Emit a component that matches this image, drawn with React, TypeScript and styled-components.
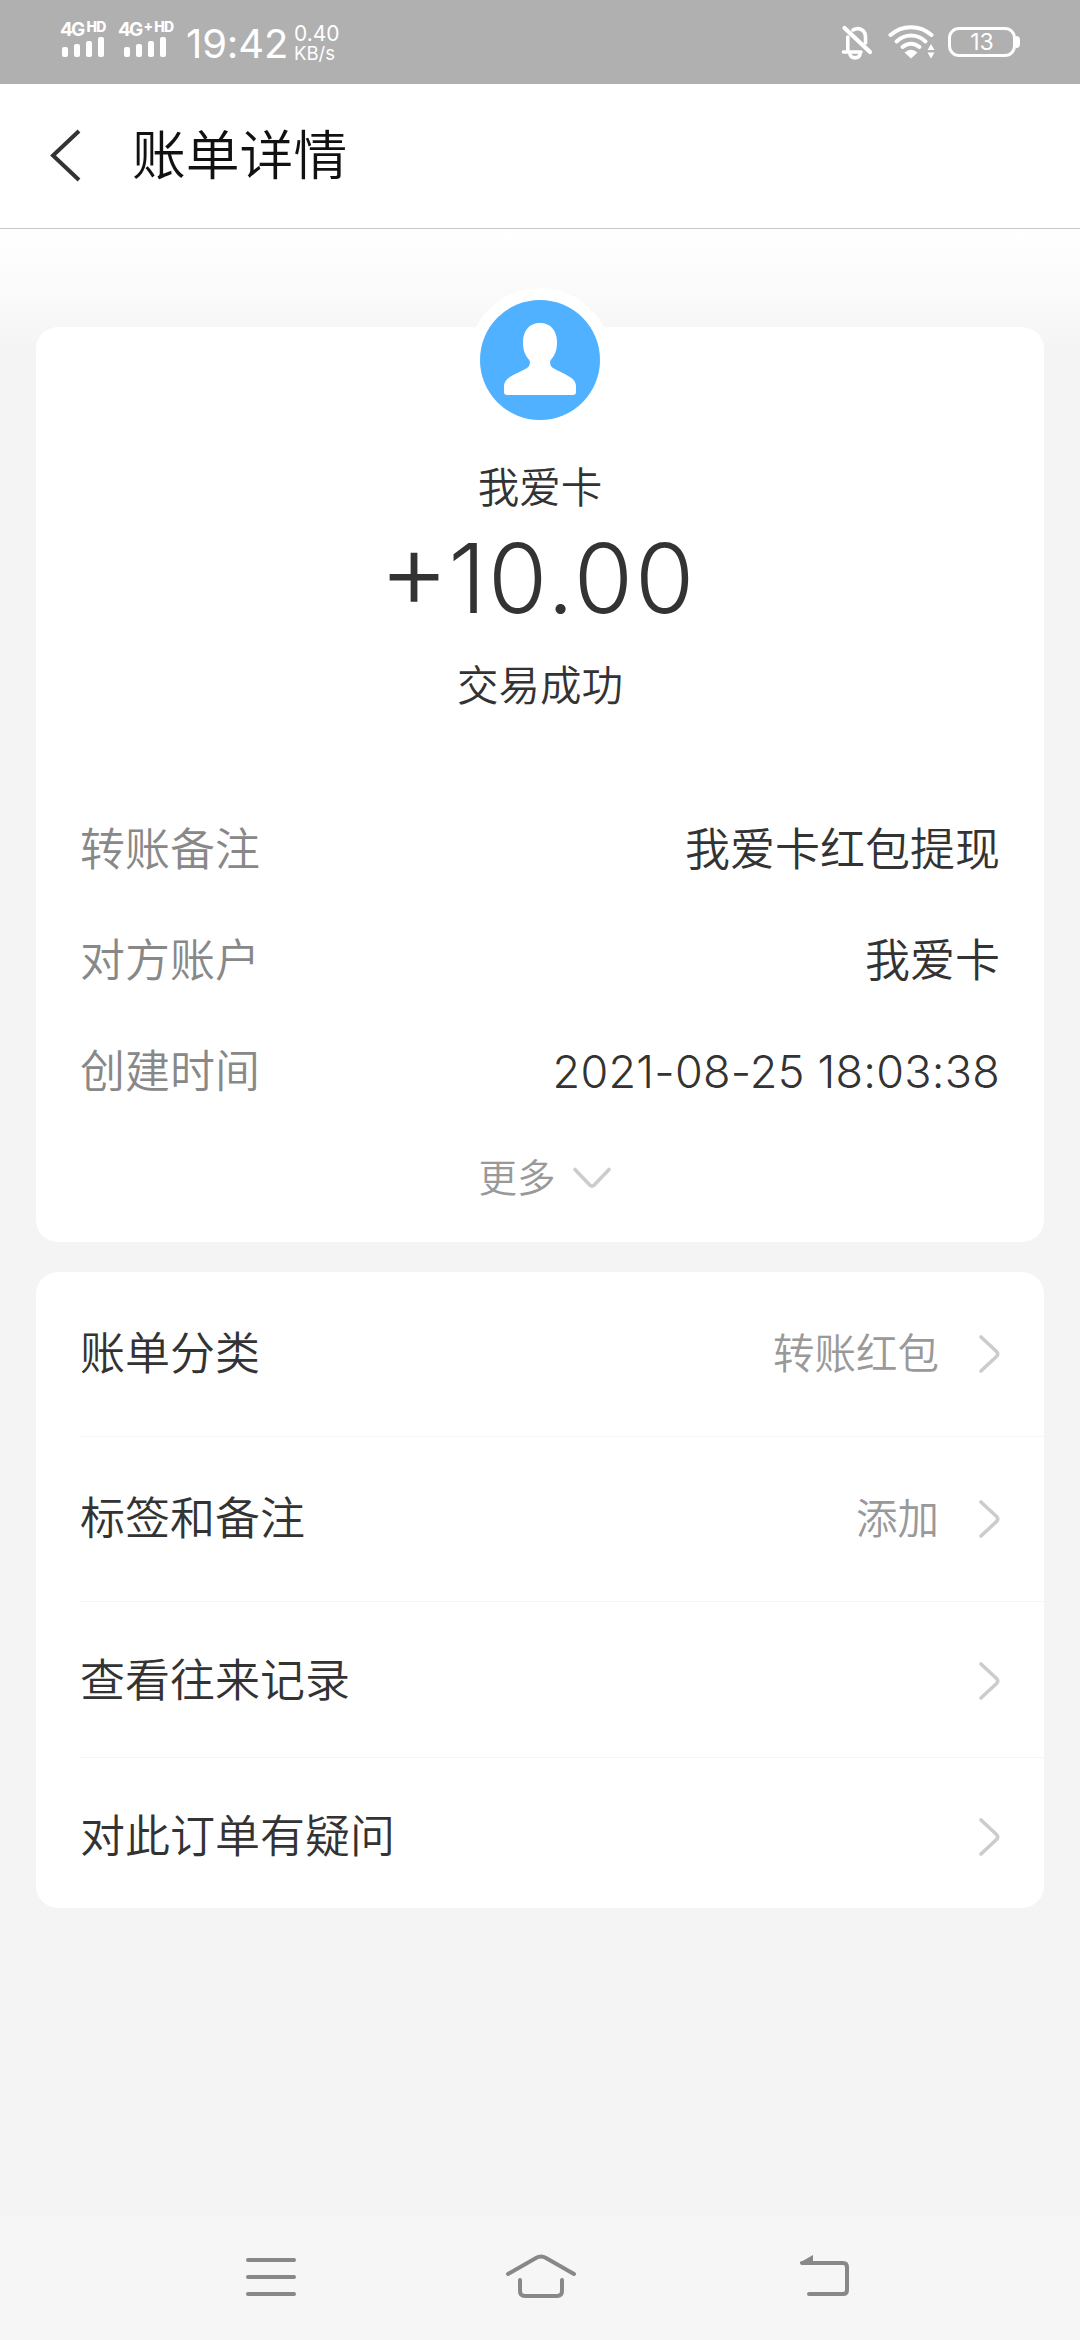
import React from "react";
import styled, { createGlobalStyle } from "styled-components";

const Global = createGlobalStyle`
  * { box-sizing: border-box; }
  body { margin: 0; background: #f4f4f4; }
`;

const Screen = styled.div`
  width: 1080px;
  height: 2340px;
  display: flex;
  flex-direction: column;
  overflow: hidden;
  background: #f4f4f4;
  color: #333;
  font-family: Inter, "Noto Sans CJK SC", sans-serif;
  font-weight: 350;
`;

const StatusBar = styled.header`
  height: 84px;
  flex: none;
  display: flex;
  justify-content: space-between;
  padding: 0 60px 0 60px;
  background: #b0b0b0;
  color: #fff;
`;

const StatusGroup = styled.div<{ $top?: number }>`
  display: flex;
  align-items: flex-start;
  padding-top: ${(p) => p.$top ?? 0}px;
`;

const Signal = styled.div<{ $width: number; $indent: number }>`
  width: ${(p) => p.$width}px;
  display: flex;
  flex-direction: column;
  padding-top: 20px;
  svg { margin-left: ${(p) => p.$indent}px; }
`;

const Network = styled.div`
  height: 17px;
  display: flex;
  align-items: flex-start;
  font-size: 19px;
  line-height: 19px;
  font-weight: 700;
  letter-spacing: -1.8px;
  white-space: nowrap;
`;

const NetworkPlus = styled.span`
  margin-left: 2px;
  font-size: 14px;
  line-height: 11px;
  font-weight: 800;
`;

const NetworkTag = styled.span`
  font-size: 14px;
  line-height: 14px;
  font-weight: 800;
  letter-spacing: -0.8px;
  margin-left: 3px;
`;

const Clock = styled.div`
  width: 108px;
  padding-top: 20px;
  font-size: 40px;
  line-height: 48px;
  font-weight: 400;
  letter-spacing: -0.1px;
`;

const Speed = styled.div`
  padding-top: 24px;
  font-size: 21px;
  line-height: 20px;
  font-weight: 400;
`;

const SpeedUnit = styled.div`
  font-size: 18.5px;
  line-height: 19px;
`;

const Battery = styled.div`
  position: relative;
  width: 68px;
  height: 30px;
  margin: 2px 4px 0 12px;
  border: 3px solid #fff;
  border-radius: 11px;
  text-align: center;
  font-size: 23px;
  line-height: 24px;
  font-weight: 400;
  &::after {
    content: "";
    position: absolute;
    left: 65px;
    top: 6px;
    width: 4px;
    height: 12px;
    border-radius: 0 5px 5px 0;
    background: #fff;
  }
`;

const TitleBar = styled.div`
  height: 145px;
  flex: none;
  display: flex;
  align-items: center;
  padding-left: 48px;
  background: #fff;
  border-bottom: 1px solid #c8c8c8;
`;

const Title = styled.h1`
  margin: 0 0 0 48px;
  font-size: 53.8px;
  line-height: 72px;
  font-weight: 350;
  color: #111;
`;

const Content = styled.main`
  height: 1987px;
  flex: none;
  padding: 98px 36px 0;
  background: linear-gradient(#fff 0, #fafafa 70px, #f4f4f4 122px);
`;

const Card = styled.section`
  background: #fff;
  border-radius: 22px;
`;

const Summary = styled(Card)`
  height: 915px;
  display: flex;
  flex-direction: column;
  align-items: center;
`;

const Avatar = styled.div`
  width: 144px;
  height: 144px;
  flex: none;
  margin-top: -39px;
  padding: 12px;
  border-radius: 50%;
  background: #fff;
`;

const Party = styled.div`
  margin-top: 28px;
  font-size: 41.5px;
  line-height: 56px;
`;

const Amount = styled.div`
  display: flex;
  align-items: center;
  margin: 2px 5px 3px 0;
  height: 120px;
  font-size: 96px;
  line-height: 116px;
  font-weight: 300;
  letter-spacing: 2px;
`;

const Sign = styled.span`
  font-size: 108px;
  margin: 0 -3px 18px 0;
`;

const State = styled.div`
  margin-top: 17px;
  font-size: 41.5px;
  line-height: 56px;
`;

const Details = styled.dl`
  width: 100%;
  margin: 80px 0 0;
  padding: 0 44px;
`;

const Detail = styled.div`
  height: 111px;
  display: flex;
  justify-content: space-between;
  align-items: center;
  font-size: 45px;
  line-height: 60px;
`;

const DetailLabel = styled.dt`
  color: #888;
`;

const DetailValue = styled.dd<{ $digits?: boolean }>`
  margin: 0;
  font-weight: ${(p) => (p.$digits ? 300 : 350)};
  letter-spacing: ${(p) => (p.$digits ? 0.25 : 0)}px;
`;

const More = styled.div`
  display: flex;
  align-items: center;
  gap: 17px;
  margin: 26px 0 0 9px;
  font-size: 38.5px;
  line-height: 50px;
  color: #999;
`;

const Menu = styled(Card)`
  height: 636px;
  margin-top: 30px;
`;

const MenuRow = styled.div<{ $height: number; $shift?: number; $last?: boolean }>`
  height: ${(p) => p.$height}px;
  margin-left: 44px;
  padding: ${(p) => p.$shift ?? 0}px 44px 0 0;
  display: flex;
  align-items: center;
  border-bottom: ${(p) => (p.$last ? 0 : 1)}px solid #f6f6f6;
  font-size: 45px;
  line-height: 60px;
`;

const MenuLabel = styled.span`
  flex: 1;
`;

const MenuValue = styled.span`
  margin-right: 40px;
  font-size: 41.5px;
  color: #999;
`;

const NavBar = styled.nav`
  height: 124px;
  flex: none;
  display: flex;
  justify-content: space-between;
  padding: 35px 225px 0 242px;
  background: #f6f6f6;
`;

const HomeSlot = styled.span`
  margin-right: 15px;
`;

const WifiSlot = styled.span`
  display: flex;
  margin-left: 15px;
`;

const Bars = () => (
  <svg width="42" height="20" viewBox="0 0 42 20" fill="#fff">
    <rect x="0" y="10" width="6" height="10" rx="2" />
    <rect x="12" y="7" width="6" height="13" rx="2" />
    <rect x="24" y="4" width="6" height="16" rx="2" />
    <rect x="36" y="0" width="6" height="20" rx="2" />
  </svg>
);

const BellOff = () => (
  <svg width="32" height="36" viewBox="0 0 32 36" fill="none" stroke="#fff" strokeWidth="3.6" strokeLinecap="round" strokeLinejoin="round">
    <path d="M6.800 27V12M12 5C18 1.500 24.500 5 24.500 12V18M2.500 27H20" />
    <path d="M3.500 3L29 27" strokeWidth="4.200" />
    <path d="M9 29.500C10.500 34 17.500 34 19 29.500" />
  </svg>
);

const Wifi = () => (
  <svg width="48" height="36" viewBox="0 0 48 36" fill="none" stroke="#fff" strokeWidth="4" strokeLinecap="round">
    <path d="M2.500 10C14 -0.500 32 -0.500 43.500 10" />
    <path d="M8.500 16.500C17 8.500 29 8.500 37.500 16.500" />
    <path d="M14.500 22C19.500 17.500 26.500 17.500 31.500 22" />
    <path d="M16.500 27.500Q23 22 29.500 27.500L23 33.500Z" fill="#fff" stroke="none" />
    <path d="M39.500 25L43 19L46.500 25ZM39.500 27.500L43 33.500L46.500 27.500Z" fill="#fff" stroke="none" />
  </svg>
);

const BackArrow = () => (
  <svg width="36" height="54" viewBox="0 0 36 54" fill="none" stroke="#333" strokeWidth="4">
    <path d="M31 2L5 26.500L31 51" />
  </svg>
);

const Person = () => (
  <svg width="120" height="120" viewBox="0 0 120 120">
    <circle cx="60" cy="60" r="60" fill="#4fb1ff" />
    <path
      fill="#fff"
      d="M60 23C49 23 43 31 43 42C43 50 45 55 48.500 59C51 62 50 66 47 68C37 74 24 77 24 86V92Q24 95 27 95H93Q96 95 96 92V86C96 77 83 74 73 68C70 66 69 62 71.500 59C75 55 77 50 77 42C77 31 71 23 60 23Z"
    />
  </svg>
);

const ChevronDown = () => (
  <svg width="38" height="22" viewBox="0 0 38 22" fill="none" stroke="#ccc" strokeWidth="3.600" strokeLinecap="round">
    <path d="M2 2.500L16.500 17.800Q19 20 21.500 17.800L36 2.500" />
  </svg>
);

const ChevronRight = () => (
  <svg width="21" height="38" viewBox="0 0 21 38" fill="none" stroke="#ccc" strokeWidth="3.600" strokeLinecap="round">
    <path d="M2 2L17.500 16.500Q20 19 17.500 21.500L2 36" />
  </svg>
);

const RecentsIcon = () => (
  <svg width="58" height="50" viewBox="0 0 58 50" stroke="#888" strokeWidth="4" strokeLinecap="round">
    <path d="M6 9H52M6 26H52M6 43H52" />
  </svg>
);

const HomeIcon = () => (
  <svg width="72" height="50" viewBox="0 0 72 50" fill="none" stroke="#888" strokeWidth="4" strokeLinecap="round">
    <path d="M3 23L31 7Q36 4 41 7L69 23" />
    <path d="M15 29V40Q15 45 20 45H52Q57 45 57 40V29" />
  </svg>
);

const ReturnIcon = () => (
  <svg width="58" height="50" viewBox="0 0 58 50" fill="none" stroke="#888" strokeWidth="4" strokeLinecap="round">
    <path d="M5 12H46Q50 12 50 16V39Q50 43 46 43H12" />
    <path d="M3 11.500L16 4V13H4Z" fill="#888" stroke="none" />
  </svg>
);

const details = [
  { label: "转账备注", value: "我爱卡红包提现" },
  { label: "对方账户", value: "我爱卡" },
  { label: "创建时间", value: "2021-08-25 18:03:38", digits: true },
];

const menu = [
  { label: "账单分类", value: "转账红包", height: 165 },
  { label: "标签和备注", value: "添加", height: 165 },
  { label: "查看往来记录", height: 156, shift: 2 },
  { label: "对此订单有疑问", height: 150, shift: 7 },
];

export default function App() {
  return (
    <Screen>
      <Global />
      <StatusBar>
        <StatusGroup>
          <Signal $width={58} $indent={2}>
            <Network>4G<NetworkTag>HD</NetworkTag></Network>
            <Bars />
          </Signal>
          <Signal $width={68} $indent={6}>
            <Network>4G<NetworkPlus>+</NetworkPlus><NetworkTag>HD</NetworkTag></Network>
            <Bars />
          </Signal>
          <Clock>19:42</Clock>
          <Speed>
            0.40
            <SpeedUnit>KB/s</SpeedUnit>
          </Speed>
        </StatusGroup>
        <StatusGroup $top={25}>
          <BellOff />
          <WifiSlot>
            <Wifi />
          </WifiSlot>
          <Battery>13</Battery>
        </StatusGroup>
      </StatusBar>
      <TitleBar>
        <BackArrow />
        <Title>账单详情</Title>
      </TitleBar>
      <Content>
        <Summary>
          <Avatar>
            <Person />
          </Avatar>
          <Party>我爱卡</Party>
          <Amount><Sign>+</Sign>10.00</Amount>
          <State>交易成功</State>
          <Details>
            {details.map((d) => (
              <Detail key={d.label}>
                <DetailLabel>{d.label}</DetailLabel>
                <DetailValue $digits={d.digits}>{d.value}</DetailValue>
              </Detail>
            ))}
          </Details>
          <More>
            更多
            <ChevronDown />
          </More>
        </Summary>
        <Menu>
          {menu.map((m, i) => (
            <MenuRow key={m.label} $height={m.height} $shift={m.shift} $last={i === menu.length - 1}>
              <MenuLabel>{m.label}</MenuLabel>
              {m.value && <MenuValue>{m.value}</MenuValue>}
              <ChevronRight />
            </MenuRow>
          ))}
        </Menu>
      </Content>
      <NavBar>
        <RecentsIcon />
        <HomeSlot>
          <HomeIcon />
        </HomeSlot>
        <ReturnIcon />
      </NavBar>
    </Screen>
  );
}
